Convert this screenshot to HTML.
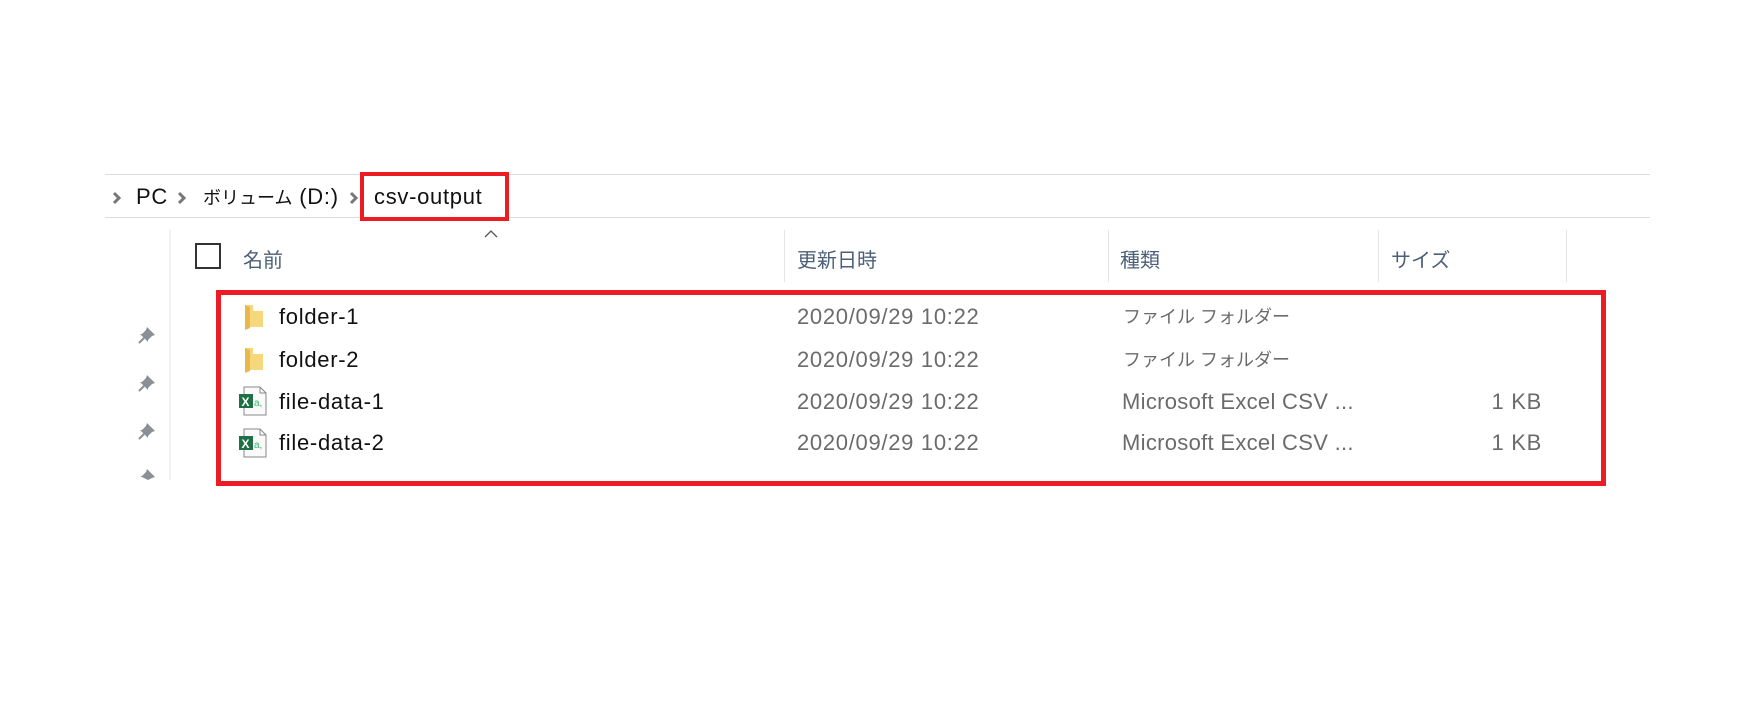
<!DOCTYPE html>
<html><head><meta charset="utf-8"><style>
body{margin:0;width:1755px;height:726px;background:#fff;position:relative;overflow:hidden;font-family:"Liberation Sans","Noto Sans CJK JP",sans-serif;}
.a{position:absolute;white-space:nowrap;}
.t{font-size:22px;line-height:26px;letter-spacing:0.7px;}
.hd{color:#4d6078;font-size:20px;}
.g{color:#6b6b6b;}
.k{color:#111;}
.j{font-size:18px;letter-spacing:0;}
</style></head><body>
<div class="a" style="left:105px;top:174px;width:1545px;height:1px;background:#dedede"></div>
<div class="a" style="left:105px;top:217px;width:1545px;height:1px;background:#dedede"></div>
<svg class="a" style="left:111px;top:190px" width="12" height="16"><path d="M3 3 L8 8 L3 13" stroke="#777" stroke-width="3" fill="none"/></svg>
<div class="a t k" style="left:136px;top:184px">PC</div>
<svg class="a" style="left:176px;top:190px" width="12" height="16"><path d="M3 3 L8 8 L3 13" stroke="#777" stroke-width="3" fill="none"/></svg>
<div class="a t k" style="left:203px;top:184px"><span class="j">ボリューム</span> (D:)</div>
<svg class="a" style="left:348px;top:190px" width="12" height="16"><path d="M3 3 L8 8 L3 13" stroke="#777" stroke-width="3" fill="none"/></svg>
<div class="a" style="left:360px;top:172px;width:141px;height:41px;border:4px solid #ec1c24"></div>
<div class="a t k" style="left:374px;top:184px">csv-output</div>

<div class="a" style="left:169px;top:230px;width:2px;height:250px;background:#f2f2f2"></div>
<div class="a" style="left:195px;top:243px;width:22px;height:22px;border:2px solid #333"></div>
<div class="a hd" style="left:243px;top:244px">名前</div>
<svg class="a" style="left:484px;top:229px" width="14" height="10"><path d="M1 8 L7 2 L13 8" stroke="#555" stroke-width="1.3" fill="none"/></svg>
<div class="a" style="left:784px;top:230px;width:1px;height:52px;background:#e5e5e5"></div>
<div class="a hd" style="left:797px;top:244px">更新日時</div>
<div class="a" style="left:1108px;top:230px;width:1px;height:52px;background:#e5e5e5"></div>
<div class="a hd" style="left:1120px;top:244px">種類</div>
<div class="a" style="left:1378px;top:230px;width:1px;height:52px;background:#e5e5e5"></div>
<div class="a hd" style="left:1391px;top:244px">サイズ</div>
<div class="a" style="left:1566px;top:230px;width:1px;height:52px;background:#e5e5e5"></div>

<div class="a" style="left:216px;top:290px;width:1390px;height:196px;border:5px solid #ec1c24;box-sizing:border-box"></div>

<svg class="a" style="left:137px;top:325px" width="20" height="20"><path d="M10 2 L18 10 L15 11 L11 15 L11 17 L3 9 L5 9 L9 5 Z" fill="#8a9096"/><path d="M7 13 L2 18" stroke="#8a9096" stroke-width="2"/></svg>
<svg class="a" style="left:137px;top:373px" width="20" height="20"><path d="M10 2 L18 10 L15 11 L11 15 L11 17 L3 9 L5 9 L9 5 Z" fill="#8a9096"/><path d="M7 13 L2 18" stroke="#8a9096" stroke-width="2"/></svg>
<svg class="a" style="left:137px;top:421px" width="20" height="20"><path d="M10 2 L18 10 L15 11 L11 15 L11 17 L3 9 L5 9 L9 5 Z" fill="#8a9096"/><path d="M7 13 L2 18" stroke="#8a9096" stroke-width="2"/></svg>
<svg class="a" style="left:137px;top:467px" width="20" height="13"><path d="M10 2 L18 10 L15 11 L11 13 L3 9 L5 9 L9 5 Z" fill="#8a9096"/></svg>

<svg class="a" style="left:243px;top:303px" width="24" height="28"><path d="M2 2 L10 2 L10 8 L20 8 L20 24 L6 24 L2 27 Z" fill="#f7d77b"/><path d="M2 2 L7 4 L7 25 L2 27 Z" fill="#e8b94a"/></svg>
<div class="a t k" style="left:279px;top:304px">folder-1</div>
<div class="a t g" style="left:797px;top:304px">2020/09/29 10:22</div>
<div class="a t g j" style="left:1123px;top:304px">ファイル フォルダー</div>

<svg class="a" style="left:243px;top:346px" width="24" height="28"><path d="M2 2 L10 2 L10 8 L20 8 L20 24 L6 24 L2 27 Z" fill="#f7d77b"/><path d="M2 2 L7 4 L7 25 L2 27 Z" fill="#e8b94a"/></svg>
<div class="a t k" style="left:279px;top:347px">folder-2</div>
<div class="a t g" style="left:797px;top:347px">2020/09/29 10:22</div>
<div class="a t g j" style="left:1123px;top:347px">ファイル フォルダー</div>

<svg class="a" style="left:238px;top:386px" width="30" height="30"><path d="M6 1 L22 1 L28 7 L28 29 L6 29 Z" fill="#fafafa" stroke="#888"/><path d="M22 1 L22 7 L28 7" fill="none" stroke="#888"/><rect x="1" y="8" width="14" height="14" fill="#1e7145"/><text x="3.5" y="20" font-size="12" font-weight="bold" fill="#fff" font-family="Liberation Sans">X</text><text x="16" y="20" font-size="10" fill="#3cb371" font-family="Liberation Sans">a,</text></svg>
<div class="a t k" style="left:279px;top:389px">file-data-1</div>
<div class="a t g" style="left:797px;top:389px">2020/09/29 10:22</div>
<div class="a t g" style="left:1122px;top:389px;letter-spacing:0.3px">Microsoft Excel CSV ...</div>
<div class="a t g" style="left:1440px;top:389px;width:102px;text-align:right">1 KB</div>

<svg class="a" style="left:238px;top:428px" width="30" height="30"><path d="M6 1 L22 1 L28 7 L28 29 L6 29 Z" fill="#fafafa" stroke="#888"/><path d="M22 1 L22 7 L28 7" fill="none" stroke="#888"/><rect x="1" y="8" width="14" height="14" fill="#1e7145"/><text x="3.5" y="20" font-size="12" font-weight="bold" fill="#fff" font-family="Liberation Sans">X</text><text x="16" y="20" font-size="10" fill="#3cb371" font-family="Liberation Sans">a,</text></svg>
<div class="a t k" style="left:279px;top:430px">file-data-2</div>
<div class="a t g" style="left:797px;top:430px">2020/09/29 10:22</div>
<div class="a t g" style="left:1122px;top:430px;letter-spacing:0.3px">Microsoft Excel CSV ...</div>
<div class="a t g" style="left:1440px;top:430px;width:102px;text-align:right">1 KB</div>
</body></html>
